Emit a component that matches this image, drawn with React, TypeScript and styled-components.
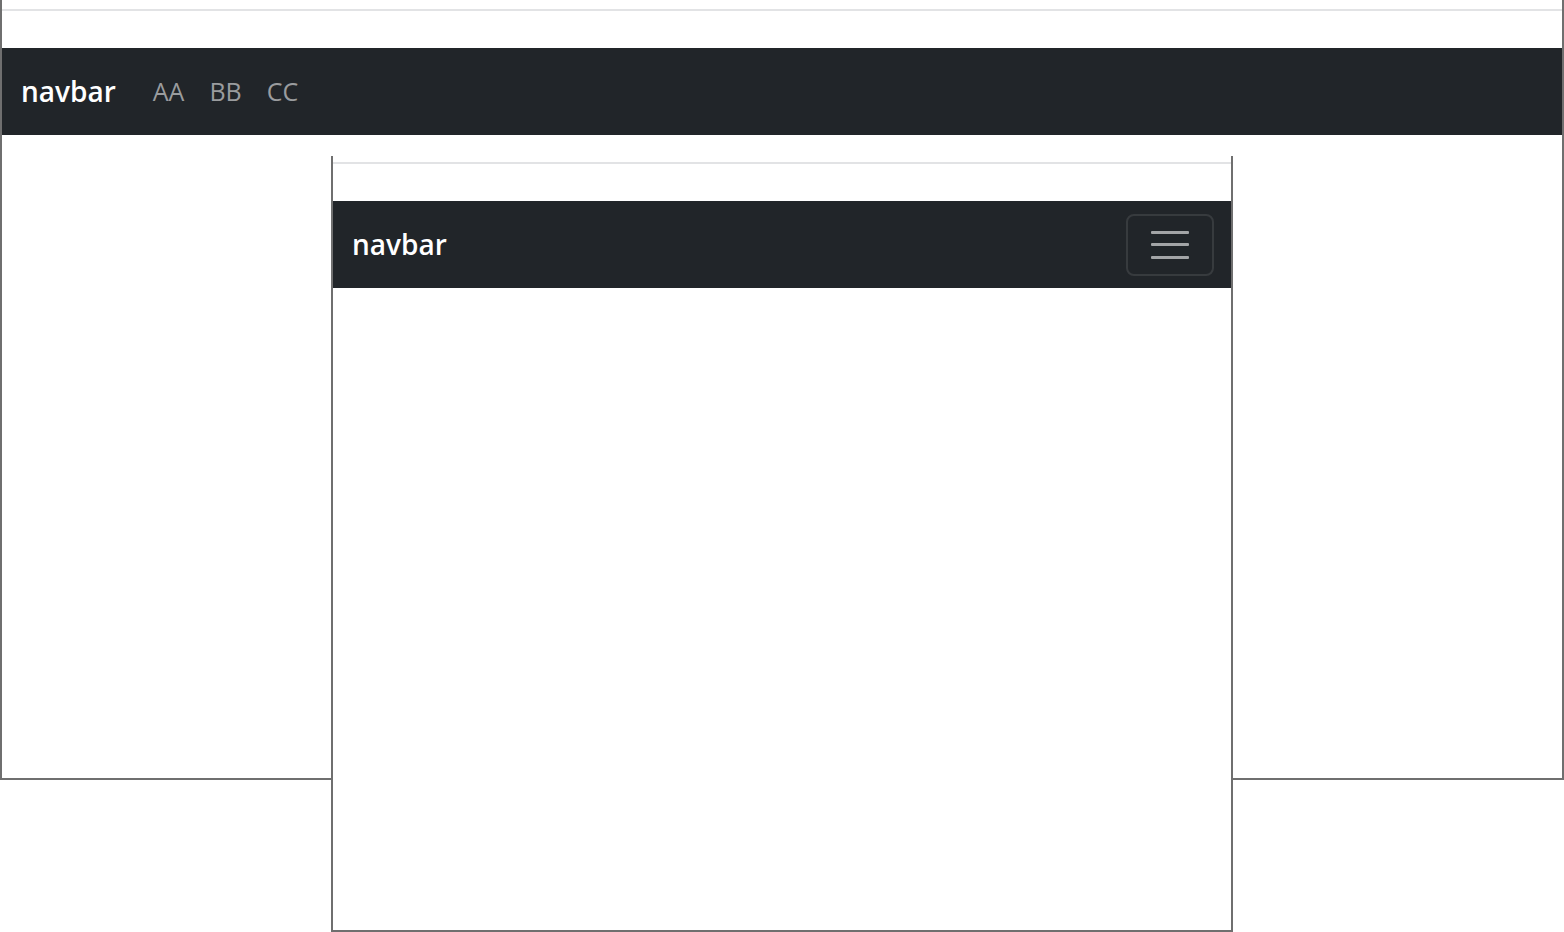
import React from "react";
import styled, { createGlobalStyle } from "styled-components";

const GlobalStyle = createGlobalStyle`
  html, body {
    margin: 0;
    padding: 0;
    background: #ffffff;
    font-family: "Open Sans", "Noto Sans", "Liberation Sans", sans-serif;
  }
  #root {
    position: relative;
    width: 1564px;
    height: 932px;
    overflow: hidden;
  }
`;

interface WindowProps {
  $left: number;
  $top: number;
  $width: number;
  $height: number;
  $z: number;
}

// each screenshot sits on the canvas like a window on a desktop
const Window = styled.div<WindowProps>`
  position: absolute;
  left: ${({ $left }) => $left}px;
  top: ${({ $top }) => $top}px;
  width: ${({ $width }) => $width}px;
  height: ${({ $height }) => $height}px;
  z-index: ${({ $z }) => $z};
  box-sizing: border-box;
  display: flex;
  flex-direction: column;
  background: #ffffff;
  border: 2px solid #6f6f6f;
  border-top: none;
`;

interface RuleProps {
  $offset: number;
}

const TopRule = styled.div<RuleProps>`
  margin-top: ${({ $offset }) => $offset}px;
  height: 2px;
  background: #e2e3e5;
  flex-shrink: 0;
`;

const Navbar = styled.nav`
  margin-top: 37px;
  height: 87px;
  flex-shrink: 0;
  display: flex;
  flex-direction: row;
  align-items: center;
  padding: 0 17px 0 19px;
  background: #212529;
`;

const Brand = styled.a`
  font-size: 28px;
  font-weight: 600;
  color: #ffffff;
  text-decoration: none;
  margin-right: 25px;
  padding-bottom: 2px;
`;

const NavLinks = styled.div`
  display: flex;
  flex-direction: row;
  align-items: center;
  margin-left: 12px;
  gap: 25px;
`;

const NavLink = styled.a`
  font-size: 25px;
  font-weight: 400;
  color: #9a9c9e;
  text-decoration: none;
  padding-bottom: 1px;
`;

const Toggler = styled.button`
  margin-left: auto;
  width: 88px;
  height: 62px;
  box-sizing: border-box;
  display: flex;
  flex-direction: column;
  align-items: center;
  justify-content: center;
  gap: 9.5px;
  background: transparent;
  border: 2px solid rgba(255, 255, 255, 0.1);
  border-radius: 8px;
  padding: 0;
`;

const TogglerBar = styled.span`
  display: block;
  width: 38px;
  height: 3px;
  border-radius: 1px;
  background: #a3a5a7;
`;

const Body = styled.div`
  flex: 1;
`;

const links = ["AA", "BB", "CC"];

const App: React.FC = () => {
  return (
    <>
      <GlobalStyle />
      <Window $left={0} $top={0} $width={1564} $height={780} $z={1}>
        <TopRule $offset={9} />
        <Navbar>
          <Brand>navbar</Brand>
          <NavLinks>
            {links.map((l) => (
              <NavLink key={l}>{l}</NavLink>
            ))}
          </NavLinks>
        </Navbar>
        <Body />
      </Window>
      <Window $left={331} $top={156} $width={902} $height={776} $z={2}>
        <TopRule $offset={6} />
        <Navbar>
          <Brand>navbar</Brand>
          <Toggler aria-label="Toggle navigation">
            <TogglerBar />
            <TogglerBar />
            <TogglerBar />
          </Toggler>
        </Navbar>
        <Body />
      </Window>
    </>
  );
};

export default App;
